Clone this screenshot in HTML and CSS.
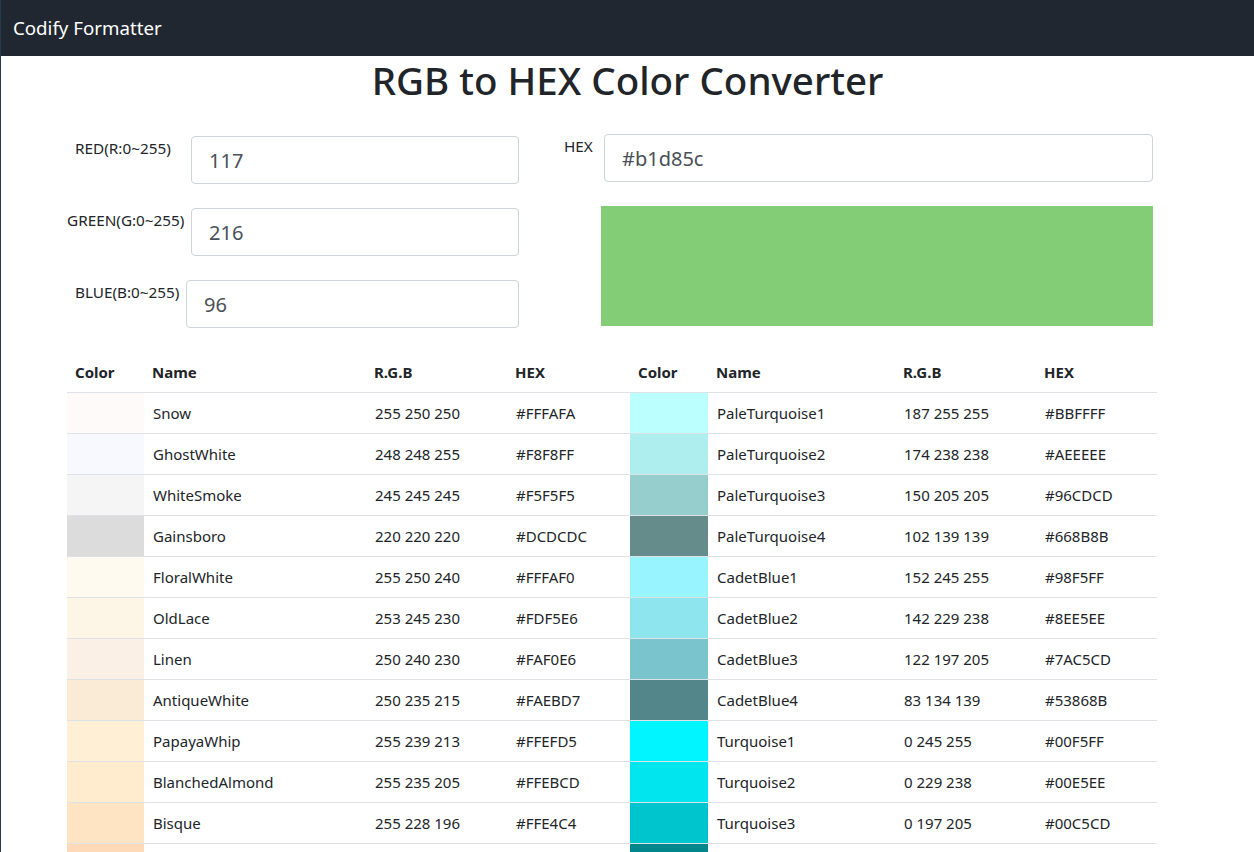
FILE: index.html
```html
<!DOCTYPE html>
<html lang="en">
<head>
    <meta charset="UTF-8">
    <meta name="viewport" content="width=device-width, initial-scale=1.0">
    <title>RGB to HEX Color Converter</title>
    <link rel="stylesheet" href="styles.css">
</head>
<body>
    <nav class="navbar">
        <a class="brand" href="#">Codify Formatter</a>
    </nav>

    <h1 class="title">RGB to HEX Color Converter</h1>

    <div class="converter">
        <div class="rgb-col">
            <div class="field">
                <label class="lbl-indent" for="red">RED(R:0~255)</label>
                <input class="form-input" id="red" type="text" value="117">
            </div>
            <div class="field">
                <label for="green">GREEN(G:0~255)</label>
                <input class="form-input" id="green" type="text" value="216">
            </div>
            <div class="field field-blue">
                <label class="lbl-indent" for="blue">BLUE(B:0~255)</label>
                <input class="form-input" id="blue" type="text" value="96">
            </div>
        </div>
        <div class="hex-col">
            <div class="field">
                <label class="lbl-hex" for="hex">HEX</label>
                <input class="form-input" id="hex" type="text" value="#b1d85c">
            </div>
            <div class="preview"></div>
        </div>
    </div>

    <table class="color-table">
        <colgroup>
            <col style="width:77px"><col style="width:222px"><col style="width:141px"><col style="width:123px">
            <col style="width:78px"><col style="width:187px"><col style="width:141px"><col style="width:121px">
        </colgroup>
        <thead>
            <tr>
                <th>Color</th><th>Name</th><th>R.G.B</th><th>HEX</th>
                <th>Color</th><th>Name</th><th>R.G.B</th><th>HEX</th>
            </tr>
        </thead>
        <tbody id="colorList"></tbody>
    </table>

    <script>
        var left = [
            ["Snow", 255, 250, 250], ["GhostWhite", 248, 248, 255], ["WhiteSmoke", 245, 245, 245],
            ["Gainsboro", 220, 220, 220], ["FloralWhite", 255, 250, 240], ["OldLace", 253, 245, 230],
            ["Linen", 250, 240, 230], ["AntiqueWhite", 250, 235, 215], ["PapayaWhip", 255, 239, 213],
            ["BlanchedAlmond", 255, 235, 205], ["Bisque", 255, 228, 196], ["PeachPuff", 255, 218, 185],
            ["NavajoWhite", 255, 222, 173], ["Moccasin", 255, 228, 181], ["Cornsilk", 255, 248, 220],
            ["Ivory", 255, 255, 240], ["LemonChiffon", 255, 250, 205], ["Seashell", 255, 245, 238],
            ["Honeydew", 240, 255, 240], ["MintCream", 245, 255, 250], ["Azure", 240, 255, 255],
            ["AliceBlue", 240, 248, 255], ["Lavender", 230, 230, 250], ["LavenderBlush", 255, 240, 245],
            ["MistyRose", 255, 228, 225], ["White", 255, 255, 255]
        ];
        var right = [
            ["PaleTurquoise1", 187, 255, 255], ["PaleTurquoise2", 174, 238, 238], ["PaleTurquoise3", 150, 205, 205],
            ["PaleTurquoise4", 102, 139, 139], ["CadetBlue1", 152, 245, 255], ["CadetBlue2", 142, 229, 238],
            ["CadetBlue3", 122, 197, 205], ["CadetBlue4", 83, 134, 139], ["Turquoise1", 0, 245, 255],
            ["Turquoise2", 0, 229, 238], ["Turquoise3", 0, 197, 205], ["Turquoise4", 0, 134, 139],
            ["Cyan1", 0, 255, 255], ["Cyan2", 0, 238, 238], ["Cyan3", 0, 205, 205],
            ["Cyan4", 0, 139, 139], ["DarkSlateGray1", 151, 255, 255], ["DarkSlateGray2", 141, 238, 238],
            ["DarkSlateGray3", 121, 205, 205], ["DarkSlateGray4", 82, 139, 139], ["Aquamarine1", 127, 255, 212],
            ["Aquamarine2", 118, 238, 198], ["Aquamarine3", 102, 205, 170], ["Aquamarine4", 69, 139, 116],
            ["DarkSeaGreen1", 193, 255, 193], ["DarkSeaGreen2", 180, 238, 180]
        ];

        function toHex(r, g, b) {
            return "#" + [r, g, b].map(function (v) {
                return ("0" + v.toString(16)).slice(-2);
            }).join("").toUpperCase();
        }

        function cells(c) {
            var hex = toHex(c[1], c[2], c[3]);
            return `
                <td class="swatch" style="background-color:${hex}"></td>
                <td>${c[0]}</td>
                <td>${c[1]} ${c[2]} ${c[3]}</td>
                <td>${hex}</td>
            `;
        }

        var list = document.getElementById("colorList");
        left.forEach(function (c, i) {
            let row = document.createElement("tr");
            row.innerHTML = cells(c) + cells(right[i]);
            list.appendChild(row);
        });
    </script>
</body>
</html>
```

FILE: styles.css
```css
body {
    margin: 0;
    font-family: "Noto Sans", "Open Sans", Arial, sans-serif;
    font-size: 15px;
    color: #212529;
    background-color: #fff;
    border-left: 1px solid #243b4f;
}

::-webkit-scrollbar { width: 7px; }
::-webkit-scrollbar-track { background: #f0f0f0; }
::-webkit-scrollbar-thumb { background: #c1c1c1; }

.navbar {
    height: 56px;
    background-color: #212730;
    padding: 0 12px;
}
.brand {
    display: inline-block;
    line-height: 56px;
    font-size: 18.7px;
    color: #fff;
    text-decoration: none;
}

.title {
    margin: 0;
    text-align: center;
    font-size: 38.5px;
    font-weight: 500;
    line-height: 48px;
}

.converter {
    display: flex;
    margin: 30px 0 0 66px;
}
.rgb-col {
    width: 452px;
    padding-top: 2px;
}
.hex-col {
    width: 589px;
    margin-left: 45px;
}

.field {
    display: flex;
    align-items: flex-start;
    margin-bottom: 24px;
}
.field label {
    width: 124px;
    flex: none;
    box-sizing: border-box;
    padding-top: 1px;
    font-size: 15.3px;
    line-height: 22px;
}
.field label.lbl-indent { padding-left: 8px; }
.field-blue label { width: 119px; }
.field label.lbl-hex { width: 40px; }

.form-input {
    flex: 1;
    min-width: 0;
    height: 48px;
    box-sizing: border-box;
    padding: 8px 17px;
    font-family: inherit;
    font-size: 20px;
    color: #495057;
    border: 1px solid #ced4da;
    border-radius: 4px;
    outline: none;
}

.preview {
    height: 120px;
    width: 552px;
    margin-left: 37px;
    background-color: #82cd75;
}

.color-table {
    width: 1090px;
    margin-left: 66px;
    table-layout: fixed;
    border-collapse: collapse;
}
.color-table th, .color-table td {
    padding: 8px;
    line-height: 24px;
    text-align: left;
    white-space: nowrap;
}
.color-table th {
    font-weight: bold;
    border-bottom: 1px solid #dee2e6;
}
.color-table td {
    border-bottom: 1px solid #dee2e6;
    padding-left: 9px;
}
```
